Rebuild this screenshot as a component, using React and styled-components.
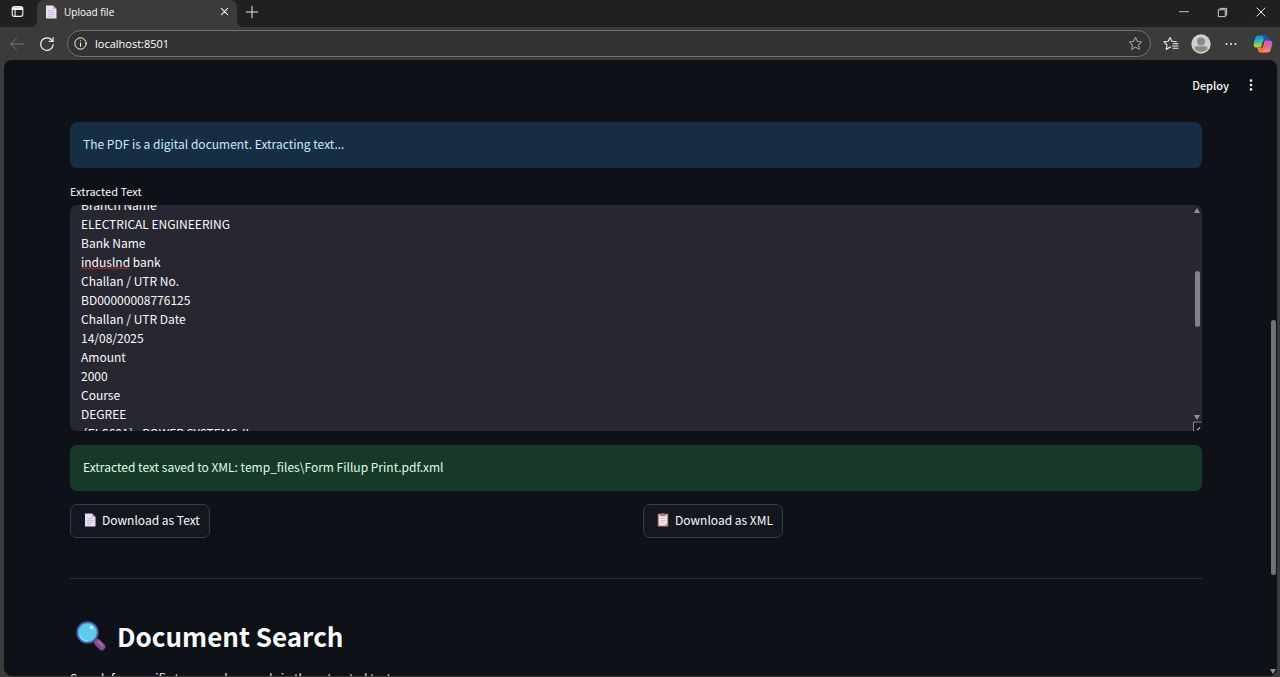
import React, { useLayoutEffect, useRef } from "react";
import styled, { createGlobalStyle } from "styled-components";

const GlobalStyle = createGlobalStyle`
  * { box-sizing: border-box; }
  body { margin: 0; background: #3b3b3b; }
  button, input, textarea { font: inherit; color: inherit; }
  button { cursor: pointer; }
`;

const appFont = `"Noto Sans CJK JP", "Noto Sans", sans-serif`;

const Browser = styled.div`
  display: flex;
  flex-direction: column;
  height: 100vh;
  padding: 0 3px 1px;
  overflow: hidden;
  background: #3b3b3b;
  color: #ffffff;
  font-family: "Open Sans", "Noto Sans", sans-serif;
`;

const TitleBar = styled.div`
  display: flex;
  flex: none;
  align-items: stretch;
  height: 27px;
  margin: 0 -3px;
  background: #202020;
`;

const IconButton = styled.button`
  display: inline-flex;
  flex: none;
  align-items: center;
  justify-content: center;
  width: ${(p) => p.$width || 30}px;
  padding: 0;
  border: 0;
  background: transparent;
  color: ${(p) => p.$color || "#f0f0f0"};
`;

const MenuCorner = styled.div`
  display: flex;
  background: #3b3b3b;
  & > button {
    width: 37px;
    padding: 0 3px 4px 0;
    border-radius: 0 0 6px 0;
    background: #202020;
  }
`;

const Tab = styled.div`
  display: flex;
  align-items: center;
  gap: 7px;
  width: 200px;
  padding: 0 4px 4px 8px;
  border-radius: 7px 7px 0 0;
  background: #3b3b3b;
  font-size: 10px;
  line-height: 16px;
`;

const TabTitle = styled.span`
  flex: 1;
`;

const AfterTab = styled.div`
  display: flex;
  flex: 1;
  background: #3b3b3b;
`;

const AfterTabInner = styled.div`
  display: flex;
  flex: 1;
  justify-content: space-between;
  padding-bottom: 3px;
  border-radius: 0 0 0 6px;
  background: #202020;
`;

const WindowControls = styled.div`
  display: flex;
`;

const Toolbar = styled.div`
  display: flex;
  flex: none;
  align-items: center;
  height: 33px;
  margin: 0 -2px 0 -1px;
`;

const AddressBar = styled.label`
  display: flex;
  flex: 1;
  align-items: center;
  height: 27px;
  margin: 0 5px;
  padding: 0 0 0 6px;
  border: 1px solid #737373;
  border-radius: 14px;
  background: #323232;
`;

const AddressInput = styled.input`
  flex: 1;
  min-width: 0;
  padding: 0;
  margin-left: 8px;
  border: 0;
  outline: 0;
  background: transparent;
  font-size: 11px;
  line-height: 18px;
`;

const Page = styled.div`
  position: relative;
  flex: 1;
  min-height: 0;
  margin-left: 1px;
  overflow: hidden;
  border-radius: 8px;
  background: #0e1117;
  color: #fafafa;
  font-family: ${appFont};
`;

const PageHeader = styled.header`
  display: flex;
  align-items: center;
  justify-content: flex-end;
  height: 50px;
  padding-right: 11px;
`;

const DeployButton = styled.button`
  padding: 0 7px;
  border: 0;
  background: transparent;
  font-size: 11px;
  font-weight: 500;
  line-height: 18px;
`;

const Main = styled.main`
  display: flex;
  flex-direction: column;
  padding: 12px 75px 0 66px;
`;

const Alert = styled.div`
  padding: 12px 13px 14px;
  border-radius: 7px;
  background: ${(p) => (p.$kind === "success" ? "#173928" : "#172d43")};
  color: ${(p) => (p.$kind === "success" ? "#dffde9" : "#c7ebff")};
  font-size: 12px;
  line-height: 20px;
`;

const Label = styled.label`
  margin-top: 15px;
  font-size: 11px;
  line-height: 16px;
`;

const TextAreaFrame = styled.div`
  position: relative;
  height: 226px;
  margin: 6px 0 14px;
  overflow: hidden;
  border-radius: 7px;
  background: #262730;
`;

const TextArea = styled.textarea`
  display: block;
  width: 100%;
  height: 100%;
  padding: 0 22px 0 11px;
  border: 0;
  outline: 0;
  resize: none;
  background: transparent;
  font-family: ${appFont};
  font-size: 12px;
  line-height: 19px;
  scrollbar-width: none;
`;

const SpellingMark = styled.svg`
  position: absolute;
  top: 62px;
  left: 11px;
`;

const ScrollThumb = styled.span`
  position: absolute;
  top: ${(p) => p.$top}px;
  right: ${(p) => p.$right}px;
  width: 5px;
  height: ${(p) => p.$height}px;
  border-radius: 3px;
  background: ${(p) => p.$color};
`;

const ScrollArrow = styled.svg`
  position: absolute;
  right: ${(p) => p.$right}px;
  ${(p) => (p.$up ? "top: 3px;" : `bottom: ${p.$bottom}px;`)}
  fill: #92939a;
`;

const ResizeGrip = styled.svg`
  position: absolute;
  right: 0;
  bottom: 0;
`;

const Downloads = styled.div`
  display: grid;
  grid-template-columns: 1fr 1fr;
  gap: 14px;
  justify-items: start;
  margin-top: 13px;
`;

const DownloadButton = styled.button`
  display: inline-flex;
  align-items: center;
  gap: 6px;
  height: 34px;
  padding: 0 9px 2px 13px;
  border: 1px solid #3b3d45;
  border-radius: 7px;
  background: #131720;
  font-size: 12px;
  line-height: 18px;
  white-space: nowrap;
`;

const Divider = styled.hr`
  width: 100%;
  height: 1px;
  margin: 40px 0 39px;
  border: 0;
  background: #2b2d34;
`;

const Title = styled.h1`
  display: flex;
  align-items: center;
  gap: 11px;
  margin: 0;
  padding-left: 6px;
  font-size: 26px;
  font-weight: 700;
  line-height: 36px;
`;

const Paragraph = styled.p`
  margin: 14px 0 0;
  font-size: 12px;
  line-height: 20px;
`;

const Stroke = ({ size = 16, w = 1, children }) => (
  <svg width={size} height={size} viewBox="0 0 16 16" fill="none" stroke="currentColor" strokeWidth={w} strokeLinecap="round" strokeLinejoin="round" aria-hidden="true">
    {children}
  </svg>
);

const PageIcon = () => (
  <svg width="12" height="14" viewBox="0 0 12 14" aria-hidden="true">
    <path d="M1 .5h7l3.500 3.500v9.500H1z" fill="#e9def2" />
    <path d="M8 .5 11.500 4H8z" fill="#bba9cc" />
    <path d="M3 5.500h5M3 7.500h6.500M3 9.500h6.500M3 11.500h4" stroke="#b9aac6" strokeWidth=".6" />
  </svg>
);

const ClipboardIcon = () => (
  <svg width="12" height="14" viewBox="0 0 12 14" aria-hidden="true">
    <rect x=".8" y=".8" width="10.400" height="12.800" rx=".8" fill="#cf8467" />
    <path d="M2 2.200h8v8.300L8.200 12.500H2z" fill="#eee5f5" />
    <path d="M10 10.500H8.200v2z" fill="#b9a5c8" />
    <path d="M3.500 1.800 5 .3h2l1.500 1.500v1.500h-5z" fill="#8c83a0" />
    <path d="M3.200 5.500h5.600M3.200 7.500h5.600M3.200 9.500h4" stroke="#b9aac6" strokeWidth=".6" />
  </svg>
);

const MagnifierIcon = () => (
  <svg width="30" height="30" viewBox="0 0 30 30" aria-hidden="true">
    <path d="m19 19 2.500 2.500" stroke="#595078" strokeWidth="3" />
    <path d="m21.800 21.800 4 4" stroke="#8a4a92" strokeWidth="7" strokeLinecap="round" />
    <path d="m22.500 20.800 4 4" stroke="#a765ac" strokeWidth="2.500" strokeLinecap="round" />
    <circle cx="11.500" cy="11.500" r="10.300" fill="#5fc9ee" stroke="#49599b" strokeWidth="1.800" />
    <path d="M3.500 13a8 8 0 0 0 8 7" stroke="#7bdcf6" strokeWidth="1.500" fill="none" />
    <circle cx="15.500" cy="6.500" r="1.700" fill="#c3f1ff" />
  </svg>
);

const CopilotIcon = () => (
  <svg width="20" height="18" viewBox="0 0 20 18" aria-hidden="true">
    <defs>
      <linearGradient id="cpLeft" x1="0" y1="0" x2="0" y2="1">
        <stop offset="0" stopColor="#1687e5" />
        <stop offset=".45" stopColor="#25b9c8" />
        <stop offset=".75" stopColor="#8ccb48" />
        <stop offset="1" stopColor="#f0c42e" />
      </linearGradient>
      <linearGradient id="cpRight" x1="0" y1="0" x2="0" y2="1">
        <stop offset="0" stopColor="#a65cf0" />
        <stop offset=".55" stopColor="#f0669b" />
        <stop offset="1" stopColor="#ff9a52" />
      </linearGradient>
    </defs>
    <path d="M6 .5h6.500c1.600 0 2 1 2.600 3l.4 1.500H12c-1.500 0-2 1-2.500 2.500L8 12.500H3.500C.8 12.500.3 10.800 1 8l1.400-5C3 1.200 4 .5 6 .5z" fill="url(#cpLeft)" />
    <path d="M9.500.5h3c1.600 0 2 1 2.600 3l.4 1.500H11z" fill="#1856bd" />
    <path d="M14 17.500H7.500c-1.600 0-2-1-2.600-3L4.500 13H8c1.500 0 2-1 2.500-2.500L12 5.500h4.500c2.700 0 3.200 1.700 2.500 4.500l-1.400 5c-.6 1.800-1.600 2.500-3.600 2.500z" fill="url(#cpRight)" />
    <path d="M9 13c1 0 1.200-1 1.600-2.500L12 5.500l1.500 0-2 7.500c-.5 2-1.500 3.500-3 4.500-2.500 0-3-1-3.600-3L4.500 13z" fill="#f07342" />
  </svg>
);

const AvatarIcon = () => (
  <svg width="20" height="20" viewBox="0 0 20 20" aria-hidden="true">
    <circle cx="10" cy="10" r="9.700" fill="#d2d0ce" />
    <circle cx="10" cy="7.500" r="4" fill="#8b8886" />
    <path d="M3.500 14.500c0-1.500 1-2.200 2.300-2.200h8.400c1.300 0 2.300.7 2.300 2.200-1.500 2.200-3.800 3.500-6.500 3.500s-5-1.300-6.500-3.500z" fill="#8b8886" />
  </svg>
);

const starPath = "m8 1.500 2 4.200 4.600.6-3.400 3.200.9 4.600L8 11.900l-4.100 2.200.9-4.600L1.400 6.300 6 5.700z";

const extractedText = [
  "Branch Name",
  "ELECTRICAL ENGINEERING",
  "Bank Name",
  "induslnd bank",
  "Challan / UTR No.",
  "BD00000008776125",
  "Challan / UTR Date",
  "14/08/2025",
  "Amount",
  "2000",
  "Course",
  "DEGREE",
  " [ELC601] - POWER SYSTEMS-II",
  "",
].join("\n");

export default function App() {
  const textRef = useRef(null);

  useLayoutEffect(() => {
    textRef.current.scrollTop = 10;
  }, []);

  return (
    <>
      <GlobalStyle />
      <Browser>
        <TitleBar>
          <MenuCorner>
            <IconButton aria-label="Tab actions">
              <Stroke size={13} w={1.4}>
                <rect x="1.500" y="2" width="13" height="12" rx="2.500" />
                <path d="M2 3.500h12v2H2z" fill="currentColor" />
                <path d="M5 6v8" />
              </Stroke>
            </IconButton>
          </MenuCorner>
          <Tab>
            <PageIcon />
            <TabTitle>Upload file</TabTitle>
            <IconButton aria-label="Close tab" $width={18}>
              <Stroke size={11} w={1.6}><path d="m3.500 3.500 9 9m0-9-9 9" /></Stroke>
            </IconButton>
          </Tab>
          <AfterTab>
            <AfterTabInner>
              <IconButton aria-label="New tab">
                <Stroke size={14} w={1.1}><path d="M8 1.500v13M1.500 8h13" /></Stroke>
              </IconButton>
              <WindowControls>
                <IconButton aria-label="Minimize" $width={38}>
                  <Stroke size={12} w={1}><path d="M2 7.500h12" /></Stroke>
                </IconButton>
                <IconButton aria-label="Restore" $width={39}>
                  <Stroke size={11} w={1.2}>
                    <rect x="2.500" y="4" width="9.500" height="10" />
                    <path d="M4.500 2h9.500v10" />
                  </Stroke>
                </IconButton>
                <IconButton aria-label="Close window" $width={38}>
                  <Stroke size={12} w={1.3}><path d="m2.500 2.500 11 11m0-11-11 11" /></Stroke>
                </IconButton>
              </WindowControls>
            </AfterTabInner>
          </AfterTab>
        </TitleBar>

        <Toolbar>
          <IconButton aria-label="Back" $color="#777777">
            <Stroke size={16} w={1}><path d="M14.500 8h-13M7.500 2 1.500 8l6 6" /></Stroke>
          </IconButton>
          <IconButton aria-label="Reload">
            <Stroke size={16} w={1.2}>
              <path d="M14.200 8.500A6.300 6.300 0 1 1 12.700 4l1.300 1.300" />
              <path d="M14 1.500v3.800h-3.800" />
            </Stroke>
          </IconButton>
          <AddressBar>
            <Stroke size={13} w={1.2}>
              <circle cx="8" cy="8" r="7" />
              <path d="M8 7.500v4M8 4.700v.2" />
            </Stroke>
            <AddressInput type="text" aria-label="Address" defaultValue="localhost:8501" />
            <IconButton aria-label="Add to favorites" $color="#a0a0a0">
              <Stroke size={15} w={1.1}><path d={starPath} /></Stroke>
            </IconButton>
          </AddressBar>
          <IconButton aria-label="Favorites">
            <Stroke size={16} w={1.1}>
              <path d="M7.500 11.300 7 11l-3.800 2.500.8-4.500L1 5.800l4.200-.6L7 1.500l1.900 3.700 4.300.6" />
              <path d="M10 7.800h5M9.500 10h5.500M10 12.200h5" />
            </Stroke>
          </IconButton>
          <IconButton aria-label="Profile"><AvatarIcon /></IconButton>
          <IconButton aria-label="Settings and more">
            <svg width="12" height="4" viewBox="0 0 12 4" fill="currentColor" aria-hidden="true">
              <circle cx="1.500" cy="2" r="1" /><circle cx="6" cy="2" r="1" /><circle cx="10.500" cy="2" r="1" />
            </svg>
          </IconButton>
          <IconButton aria-label="Copilot" $width={33}><CopilotIcon /></IconButton>
        </Toolbar>

        <Page>
          <PageHeader>
            <DeployButton>Deploy</DeployButton>
            <IconButton aria-label="Main menu">
              <svg width="4" height="12" viewBox="0 0 4 12" fill="currentColor" aria-hidden="true">
                <circle cx="2" cy="1.600" r="1.300" /><circle cx="2" cy="6" r="1.300" /><circle cx="2" cy="10.400" r="1.300" />
              </svg>
            </IconButton>
          </PageHeader>
          <Main>
            <Alert $kind="info">The PDF is a digital document. Extracting text...</Alert>
            <Label htmlFor="extracted-text">Extracted Text</Label>
            <TextAreaFrame>
              <TextArea id="extracted-text" ref={textRef} spellCheck={false} defaultValue={extractedText} />
              <SpellingMark width="49" height="3" viewBox="0 0 49 3" aria-hidden="true">
                <path d={"M0 2" + " l2 -1.500 l2 1.500".repeat(12)} fill="none" stroke="#d3202c" />
              </SpellingMark>
              <ScrollArrow $up $right={2} width="6" height="5" viewBox="0 0 6 5" aria-hidden="true"><path d="M3 0 6 5H0z" /></ScrollArrow>
              <ScrollThumb $top={66} $right={2} $height={56} $color="#82838a" />
              <ScrollArrow $right={2} $bottom={11} width="6" height="5" viewBox="0 0 6 5" aria-hidden="true"><path d="M0 0h6L3 5z" /></ScrollArrow>
              <ResizeGrip width="9" height="10" viewBox="0 0 9 10" aria-hidden="true">
                <path d="M0 0h9v8L7 10H0z" fill="#16181f" />
                <path d="M.5 10V1H9" fill="none" stroke="#888990" />
                <path d="M4 8.500h1.500L7 6" fill="none" stroke="#d0d0d0" />
              </ResizeGrip>
            </TextAreaFrame>
            <Alert $kind="success">Extracted text saved to XML: temp_files\Form Fillup Print.pdf.xml</Alert>
            <Downloads>
              <DownloadButton><PageIcon />Download as Text</DownloadButton>
              <DownloadButton><ClipboardIcon />Download as XML</DownloadButton>
            </Downloads>
            <Divider />
            <Title><MagnifierIcon />Document Search</Title>
            <Paragraph>Search for specific terms or keywords in the extracted text.</Paragraph>
          </Main>
          <ScrollThumb $top={260} $right={1} $height={255} $color="#727376" />
          <ScrollArrow $right={1} $bottom={2} width="6" height="5" viewBox="0 0 6 5" aria-hidden="true"><path d="M0 0h6L3 5z" /></ScrollArrow>
        </Page>
      </Browser>
    </>
  );
}
